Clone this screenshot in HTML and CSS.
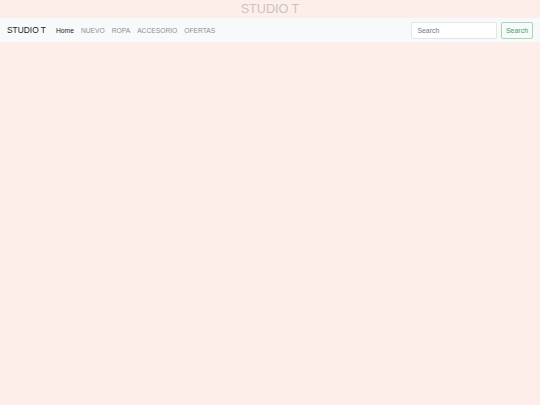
FILE: index.html
```html
<!DOCTYPE html>
<html lang="es">
<head>
<meta charset="utf-8">
<title>STUDIO T</title>
<link rel="stylesheet" href="styles.css">
</head>
<body>
<h1 class="site-title">STUDIO T</h1>
<nav class="navbar">
  <a class="brand" href="#">STUDIO T</a>
  <ul class="nav-links">
    <li><a class="nav-link active" href="#">Home</a></li>
    <li><a class="nav-link" href="#">NUEVO</a></li>
    <li><a class="nav-link" href="#">ROPA</a></li>
    <li><a class="nav-link" href="#">ACCESORIO</a></li>
    <li><a class="nav-link" href="#">OFERTAS</a></li>
  </ul>
  <form class="search-form">
    <input class="search-input" type="search" placeholder="Search">
    <button class="search-btn" type="button">Search</button>
  </form>
</nav>
</body>
</html>
```

FILE: styles.css
```css
html, body {
  margin: 0;
  padding: 0;
}
body {
  background: #fdeeea;
  font-family: "Liberation Sans", Arial, sans-serif;
  min-height: 405px;
}
.site-title {
  margin: 0;
  text-align: center;
  font-size: 12.6px;
  line-height: 18px;
  font-weight: normal;
  color: #c8c4c3;
}
.navbar {
  display: flex;
  align-items: center;
  background: #f8f9fa;
  padding: 3.6px 7px 3.6px 7px;
  height: 24px;
  box-sizing: border-box;
}
.brand {
  font-size: 8.4px;
  color: #1a1a1a;
  text-decoration: none;
  margin-right: 6.6px;
  line-height: 14px;
}
.nav-links {
  display: flex;
  list-style: none;
  margin: 0;
  padding: 0;
  flex: 1;
}
.nav-link {
  display: block;
  font-size: 6.7px;
  padding: 3.6px 3.5px;
  color: #8f9091;
  text-decoration: none;
}
.nav-link.active {
  color: #1c1c1c;
}
.search-form {
  display: flex;
  align-items: center;
  gap: 4px;
}
.search-input {
  box-sizing: border-box;
  width: 86px;
  height: 17px;
  padding: 1.7px 5.4px;
  font-family: inherit;
  font-size: 6.9px;
  border: 1px solid #e3e6e8;
  border-radius: 2px;
  background: #fff;
  outline: none;
}
.search-input::placeholder {
  color: #74797d;
}
.search-btn {
  box-sizing: border-box;
  height: 17px;
  width: 32px;
  padding: 0;
  font-family: inherit;
  font-size: 7px;
  color: #3aa85a;
  background: transparent;
  border: 1px solid #a4d9b1;
  border-radius: 2px;
}
```
